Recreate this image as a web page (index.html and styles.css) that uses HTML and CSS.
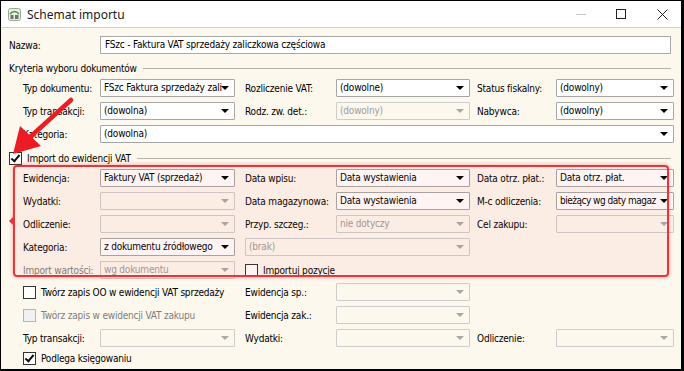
FILE: index.html
```html
<!DOCTYPE html>
<html lang="pl">

<head>
    <meta charset="UTF-8">
    <title>Schemat importu</title>
    <link rel="stylesheet" href="styles.css">
</head>

<body>
    <div class="window">
        <div class="titlebar">
            <svg class="app-icon" width="13" height="13" viewBox="0 0 13 13">
                <rect x="0.5" y="0.5" width="12" height="12" rx="2" fill="#e9efe6" stroke="#9aa894"/>
                <path d="M2 6 Q6.5 1 11 6" fill="none" stroke="#3f9a3a" stroke-width="1.6"/>
                <rect x="2.5" y="7" width="3" height="4" fill="#6b7566"/>
                <rect x="7" y="7" width="3.5" height="4" fill="#6b7566"/>
            </svg>
            <span class="title">Schemat importu</span>
            <div class="controls">
                <span class="ctl ctl-min"></span>
                <span class="ctl ctl-max"></span>
                <svg class="ctl ctl-close" width="11" height="11" viewBox="0 0 11 11">
                    <path d="M0.5 0.5 L10.5 10.5 M10.5 0.5 L0.5 10.5" stroke="#222" stroke-width="1"/>
                </svg>
            </div>
        </div>

        <div class="content">
            <div class="name-row">
                <span class="name-label">Nazwa:</span>
                <div class="field">FSzc - Faktura VAT sprzedaży zaliczkowa częściowa</div>
            </div>

            <div class="group-head">
                <span>Kryteria wyboru dokumentów</span>
            </div>

            <div class="grid criteria">
                <span class="lbl">Typ dokumentu:</span>
                <div class="sel">FSzc Faktura sprzedaży zali</div>
                <span class="lbl l2">Rozliczenie VAT:</span>
                <div class="sel">(dowolne)</div>
                <span class="lbl l3">Status fiskalny:</span>
                <div class="sel">(dowolny)</div>

                <span class="lbl">Typ transakcji:</span>
                <div class="sel">(dowolna)</div>
                <span class="lbl l2">Rodz. zw. det.:</span>
                <div class="sel dis">(dowolny)</div>
                <span class="lbl l3">Nabywca:</span>
                <div class="sel">(dowolny)</div>

                <span class="lbl">Kategoria:</span>
                <div class="sel span-rest">(dowolna)</div>
            </div>

            <div class="group-head check-head">
                <span class="cb checked"></span>
                <span>Import do ewidencji VAT</span>
            </div>

            <div class="grid vat">
                <span class="lbl">Ewidencja:</span>
                <div class="sel">Faktury VAT (sprzedaż)</div>
                <span class="lbl l2">Data wpisu:</span>
                <div class="sel">Data wystawienia</div>
                <span class="lbl l3">Data otrz. płat.:</span>
                <div class="sel">Data otrz. płat.</div>

                <span class="lbl">Wydatki:</span>
                <div class="sel dis"></div>
                <span class="lbl l2">Data magazynowa:</span>
                <div class="sel">Data wystawienia</div>
                <span class="lbl l3">M-c odliczenia:</span>
                <div class="sel tight">bieżący wg daty magaz</div>

                <span class="lbl">Odliczenie:</span>
                <div class="sel dis"></div>
                <span class="lbl l2">Przyp. szczeg.:</span>
                <div class="sel dis">nie dotyczy</div>
                <span class="lbl l3">Cel zakupu:</span>
                <div class="sel dis"></div>

                <span class="lbl">Kategoria:</span>
                <div class="sel">z dokumentu źródłowego</div>
                <div class="sel dis span-mid">(brak)</div>
                <span></span>
                <span></span>

                <span class="lbl muted">Import wartości:</span>
                <div class="sel dis">wg dokumentu</div>
                <label class="chk l2 span-mid"><span class="cb"></span>Importuj pozycje</label>
            </div>

            <div class="grid extra">
                <label class="chk span-first"><span class="cb"></span>Twórz zapis OO w ewidencji VAT sprzedaży</label>
                <span class="lbl l2">Ewidencja sp.:</span>
                <div class="sel dis"></div>
                <span></span>
                <span></span>

                <label class="chk span-first muted"><span class="cb dis"></span>Twórz zapis w ewidencji VAT zakupu</label>
                <span class="lbl l2">Ewidencja zak.:</span>
                <div class="sel dis"></div>
                <span></span>
                <span></span>

                <span class="lbl">Typ transakcji:</span>
                <div class="sel dis"></div>
                <span class="lbl l2">Wydatki:</span>
                <div class="sel dis"></div>
                <span class="lbl l3">Odliczenie:</span>
                <div class="sel dis"></div>

                <label class="chk span-first"><span class="cb checked"></span>Podlega księgowaniu</label>
            </div>
        </div>

        <!-- annotation overlay -->
        <div class="highlight"><span class="notch"></span></div>
        <svg class="arrow" width="80" height="70" viewBox="0 0 80 70">
            <path d="M68 4 L26 42" stroke="#ec1c24" stroke-width="4.5" stroke-linecap="round"/>
            <polygon points="10,58 17,30 38,50" fill="#ec1c24"/>
        </svg>
    </div>
</body>

</html>
```

FILE: styles.css
```css
body {
    margin: 0;
    background-color: #000000;
    width: 684px;
    height: 371px;
    overflow: hidden;
}

.window {
    position: relative;
    margin: 1px 3px 0 1px;
    height: 368px;
    background-color: #fdf8ee;
    color: #000000;
    font-family: "DejaVu Sans Condensed", "DejaVu Sans", sans-serif;
    font-stretch: condensed;
    font-size: 10px;
    letter-spacing: -0.2px;
    overflow: hidden;
}

/* title bar */

.titlebar {
    display: flex;
    align-items: center;
    height: 26px;
    background-color: #ffffff;
    border-bottom: 1px solid #cfcfcf;
}

.app-icon {
    margin-left: 7px;
}

.title {
    margin-left: 6px;
    font-family: "Noto Sans", "Open Sans", sans-serif;
    font-stretch: normal;
    font-size: 12px;
    letter-spacing: 0;
    color: #1a1a1a;
}

.controls {
    margin-left: auto;
    display: flex;
    align-items: center;
}

.ctl {
    display: block;
}

.ctl-min {
    width: 10px;
    height: 1px;
    background-color: #c6c6c6;
    margin-right: 30px;
}

.ctl-max {
    width: 8px;
    height: 8px;
    border: 1px solid #222;
    margin-right: 31px;
}

.ctl-close {
    margin-right: 13px;
}

/* content */

.content {
    padding: 8px 0 0 8px;
}

.name-row {
    display: flex;
    align-items: center;
    height: 18px;
}

.name-label {
    width: 91px;
}

.field {
    width: 565px;
    height: 16px;
    line-height: 16px;
    padding-left: 4px;
    border: 1px solid #a9a9a9;
    background-color: #ffffff;
    white-space: nowrap;
}

.group-head {
    display: flex;
    align-items: center;
    height: 14px;
    margin-top: 7px;
    margin-right: 10px;
}

.group-head::after {
    content: "";
    flex: 1;
    height: 1px;
    margin-left: 6px;
    background-color: #b7b3ab;
}

.check-head {
    margin-top: 8px;
}

.check-head .cb {
    margin-right: 5px;
}

/* form grids */

.grid {
    display: grid;
    grid-template-columns: 77px 135px 101px 134px 86px 118px;
    grid-auto-rows: 18px;
    row-gap: 5px;
    margin-left: 14px;
    margin-top: 4px;
}

.extra {
    grid-template-rows: 18px 18px 18px 13px;
}

.lbl {
    display: flex;
    align-items: center;
    white-space: nowrap;
}

.l2 {
    padding-left: 10px;
}

.l3 {
    padding-left: 7px;
}

.muted {
    color: #7d7d7d;
}

.sel {
    position: relative;
    height: 16px;
    line-height: 16px;
    padding-left: 3px;
    padding-right: 14px;
    border: 1px solid #a6a6a6;
    border-radius: 1px;
    background-color: #ffffff;
    white-space: nowrap;
    overflow: hidden;
}

.sel.tight {
    letter-spacing: -0.5px;
}

.sel::after {
    content: "";
    position: absolute;
    right: 5px;
    top: 6px;
    border-left: 4px solid transparent;
    border-right: 4px solid transparent;
    border-top: 4px solid #000000;
}

.sel.dis {
    background-color: transparent;
    border-color: #cdcdcd;
    color: #9c9c9c;
}

.sel.dis::after {
    border-top-color: #a8a8a8;
}

.span-rest {
    grid-column: 2 / 7;
}

.span-mid {
    grid-column: 3 / 5;
    margin-left: 10px;
}

label.span-mid {
    margin-left: 0;
}

.span-first {
    grid-column: 1 / 3;
}

.chk {
    display: flex;
    align-items: center;
    white-space: nowrap;
}

.chk .cb {
    margin-right: 5px;
}

.cb {
    position: relative;
    display: inline-block;
    width: 11px;
    height: 11px;
    border: 1px solid #333333;
    background-color: #ffffff;
    flex: none;
}

.cb.dis {
    border-color: #b5b5b5;
    background-color: #f1f1f1;
}

.cb.checked::after {
    content: "";
    position: absolute;
    left: 3px;
    top: 0px;
    width: 3px;
    height: 7px;
    border-right: 2px solid #111;
    border-bottom: 2px solid #111;
    transform: rotate(40deg);
}

/* red annotation */

.highlight {
    position: absolute;
    left: 12px;
    top: 164px;
    width: 652px;
    height: 108px;
    border: 2px solid #e8343b;
    border-radius: 4px;
    background-color: rgba(240, 60, 60, 0.06);
    box-shadow: 0 0 4px rgba(240, 60, 60, 0.45);
}

.notch {
    position: absolute;
    left: -6px;
    top: 50px;
    border-top: 4px solid transparent;
    border-bottom: 4px solid transparent;
    border-right: 4px solid #e8343b;
}

.arrow {
    position: absolute;
    left: 2px;
    top: 95px;
}
```
